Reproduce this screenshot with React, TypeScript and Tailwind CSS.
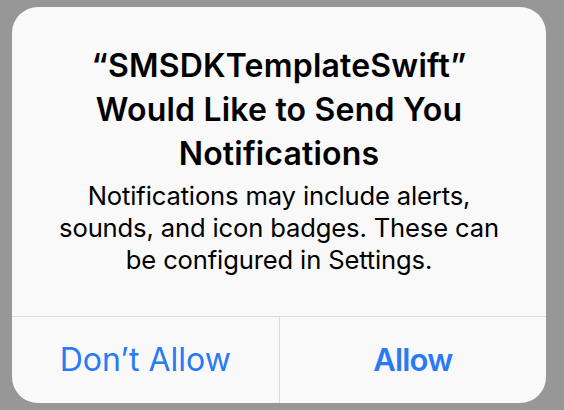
import React from "react";

export default function App() {
  return (
    <div className="w-[564px] h-[410px] bg-[#979797] pt-[7px] pl-[12px]" style={{ fontFamily: "Inter, 'Noto Sans', sans-serif" }}>
      <div className="w-[534px] h-[396px] bg-[#f9f9f9] rounded-[26px] flex flex-col overflow-hidden">
        <div className="flex-1 pt-[37px] px-[20px] flex flex-col items-center text-center">
          <div className="text-[32px] leading-[44px] font-semibold text-black tracking-[0.2px]">
            “SMSDKTemplateSwift”
            <br />
            Would Like to Send You
            <br />
            Notifications
          </div>
          <div className="mt-[4px] text-[25.6px] leading-[32px] text-black tracking-[-0.15px]">
            Notifications may include alerts,
            <br />
            sounds, and icon badges. These can
            <br />
            be configured in Settings.
          </div>
        </div>
        <div className="h-[87px] border-t border-[#dcdcdc] flex">
          <div className="flex-1 flex items-center justify-center text-[32px] text-[#2a7af5] border-r border-[#dcdcdc]">
            Don’t Allow
          </div>
          <div className="flex-1 flex items-center justify-center text-[31px] font-semibold text-[#2a7af5] tracking-[-0.8px]">
            Allow
          </div>
        </div>
      </div>
    </div>
  );
}
